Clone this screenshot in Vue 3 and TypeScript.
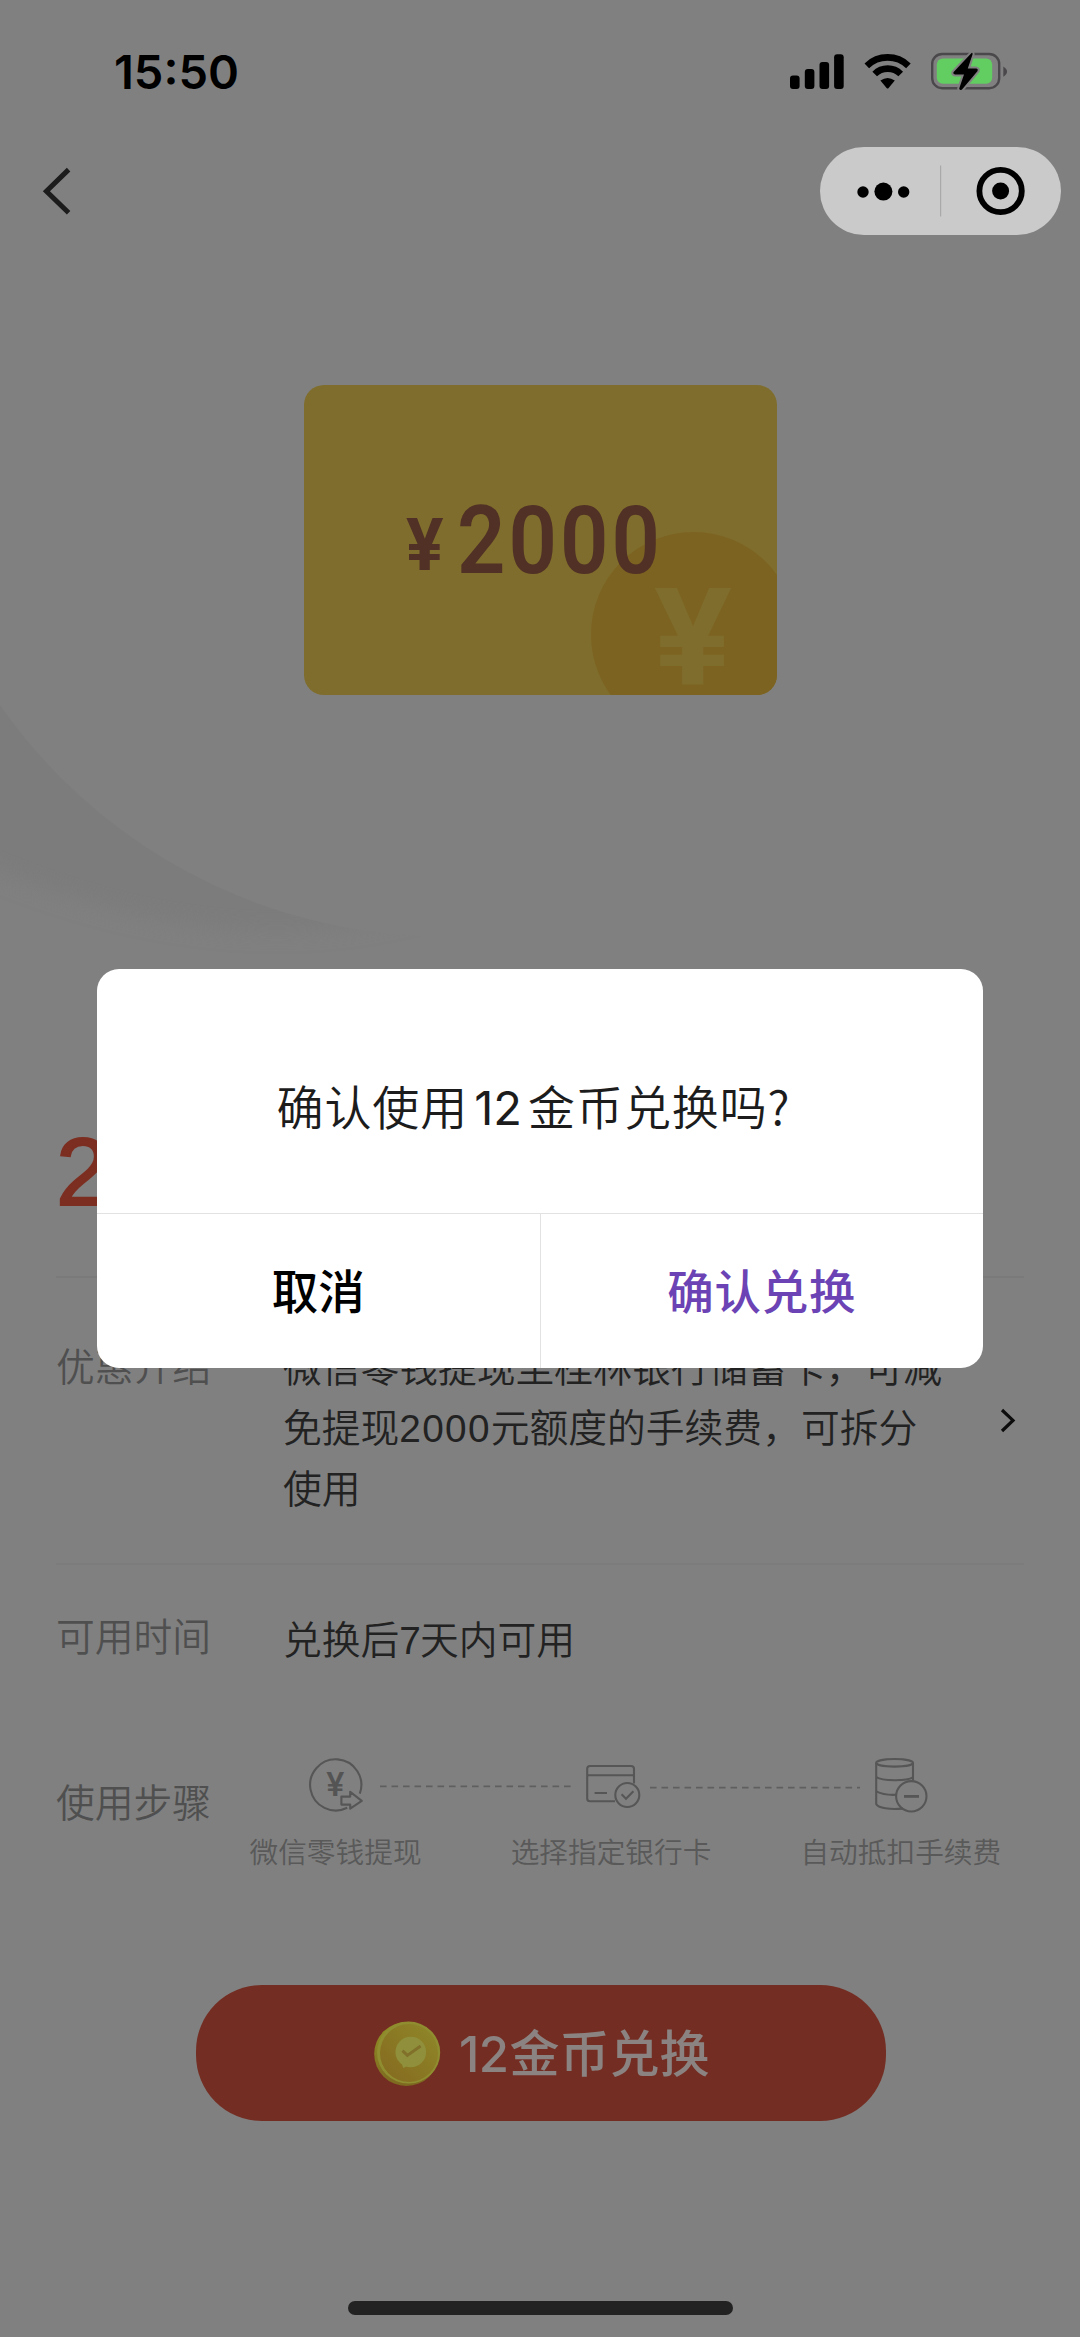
<script setup lang="ts">
interface Step {
  label: string
}

const introLines: string[] = ['微信零钱提现至桂林银行储蓄卡，可减', '免提现|2000|元额度的手续费，可拆分', '使用']
const steps: Step[] = [{ label: '微信零钱提现' }, { label: '选择指定银行卡' }, { label: '自动抵扣手续费' }]
const coins = 12

const isNumber = (part: string): boolean => /^\d+$/.test(part)
</script>

<template>
  <div class="page">
    <svg class="backdrop" viewBox="0 0 1080 968" aria-hidden="true">
      <defs>
        <filter id="soft" x="-20%" y="-20%" width="140%" height="140%">
          <feGaussianBlur stdDeviation="10" />
        </filter>
        <mask id="outside">
          <rect width="1080" height="968" fill="#fff" />
          <circle cx="444.6" cy="394" r="542.6" fill="#000" />
        </mask>
      </defs>
      <g mask="url(#outside)">
        <path d="M-60 600 L60 680 L420 912 Q200 970 -60 845 Z" fill="#7b7b7b" filter="url(#soft)" />
      </g>
    </svg>

    <header class="status">
      <span class="time">15:50</span>
      <svg class="status-icons" width="220" height="44" viewBox="788 50 220 44">
        <rect x="790" y="75.5" width="9.6" height="13.5" rx="3" />
        <rect x="804.8" y="69" width="9.6" height="20" rx="3" />
        <rect x="819.5" y="62" width="9.6" height="27" rx="3" />
        <rect x="834.1" y="54.3" width="9.6" height="34.7" rx="3" />
        <g fill="none" stroke="#000" stroke-width="6.6">
          <path d="M866.8 65.8 A30 30 0 0 1 908.4 65.8" />
          <path d="M874.7 74 A18.5 18.5 0 0 1 900.7 74" />
        </g>
        <path d="M880.4 80.6 Q887.6 75.4 894.8 80.6 L888.6 88 Q887.6 89 886.6 88 Z" />
        <rect x="932.2" y="54" width="67" height="34.2" rx="10" fill="none" stroke="#4b484b" stroke-width="2.4" />
        <path d="M1003.3 66.5 Q1010.8 71.6 1003.3 76.8 Z" fill="#4b484b" />
        <rect x="936.8" y="58.6" width="55.4" height="25.2" rx="6" fill="#62cd60" />
        <path
          d="M971.5 53 L953.4 72.3 Q952.8 74.3 955 74.5 L964 74.5 L959.2 88.6 Q959.6 91 962 89.4 L977.6 71 Q978.4 69 976.4 68.6 L967.8 68.6 L972.6 54.2 Q972.6 52.4 971.5 53 Z"
          stroke="#808080" stroke-width="4" paint-order="stroke"
        />
      </svg>
    </header>

    <nav class="nav">
      <svg width="34" height="50" viewBox="40 166 34 50" fill="none" stroke="#1c1c1c" stroke-width="5">
        <path d="M68.6 169.6 L46.4 191.2 L68.6 212.8" />
      </svg>
      <div class="capsule">
        <svg width="241" height="88" viewBox="820 147 241 88">
          <circle cx="863" cy="192" r="5.7" />
          <circle cx="883.4" cy="191.6" r="9" />
          <circle cx="903.7" cy="192" r="5.7" />
          <rect x="940" y="165.5" width="1.2" height="51" fill="#a9a9a9" />
          <circle cx="1000.6" cy="191" r="21.2" fill="none" stroke="#000" stroke-width="5.8" />
          <circle cx="1000.6" cy="191" r="8.5" />
        </svg>
      </div>
    </nav>

    <section class="coupon">
      <span class="coin-layer"><span class="coin-mark"></span></span>
      <span class="coin-yen">¥</span>
      <span class="yen">¥</span><span class="amount">2000</span>
    </section>

    <main class="details">
      <div class="headline">2</div>

      <div class="row intro">
        <span class="label">优惠介绍</span>
        <div class="value">
          <div v-for="line in introLines" :key="line" class="line">
            <span v-for="part in line.split('|')" :key="part" :class="{ num: isNumber(part) }">{{ part }}</span>
          </div>
        </div>
        <svg class="more" width="18" height="28" viewBox="999 1406 18 28" fill="none" stroke="#0c0c0c" stroke-width="3.2">
          <path d="M1002 1410 L1013 1420.4 L1002 1431" />
        </svg>
      </div>

      <div class="row period">
        <span class="label">可用时间</span>
        <div class="value">兑换后<span class="num">7</span>天内可用</div>
      </div>

      <div class="row usage">
        <span class="label">使用步骤</span>
        <div class="steps">
          <svg width="770" height="66" viewBox="240 1752 770 66" fill="none" stroke="#565656" stroke-width="2.1">
            <path d="M347.2 1807.8 A25.6 25.6 0 1 1 359.8 1793.6" />
            <path d="M341.4 1796.6 H350.2 V1791.8 L361.8 1800.8 L350.2 1808.6 V1804.6 H341.4 Z" stroke-linejoin="round" />
            <text class="step-yen" x="335.4" y="1795.6" text-anchor="middle">¥</text>
            <path d="M380 1786.3 H571.5" stroke="#5f5f5f" stroke-width="1.8" stroke-dasharray="6.6 4.9" />
            <path d="M615 1801.2 H590 Q587.2 1801.2 587.2 1798.4 V1768.8 Q587.2 1766 590 1766 H631 Q634 1766 634 1768.8 V1783.6" />
            <path d="M587.2 1775.2 H634 M594.6 1793 H607" />
            <circle cx="627.3" cy="1795" r="12" />
            <path d="M621.6 1794.2 L626 1798.8 L633.4 1791.2" />
            <path d="M650 1787.7 H860" stroke="#5f5f5f" stroke-width="1.8" stroke-dasharray="6.6 4.9" />
            <ellipse cx="894.6" cy="1762.8" rx="18.4" ry="3.8" />
            <path d="M876.2 1763 V1804 C878 1808 890 1810 902.6 1808.6 M913 1763 V1780.6" />
            <path d="M876.2 1777 C882 1781 906 1781.4 913 1777.4 M876.2 1791.4 Q884 1795.4 896 1794.8" />
            <circle cx="911.3" cy="1796.3" r="15.2" />
            <path d="M904 1796.4 H919" stroke-width="2.8" />
          </svg>
          <div class="step-labels">
            <span v-for="step in steps" :key="step.label">{{ step.label }}</span>
          </div>
        </div>
      </div>
    </main>

    <button class="redeem" type="button">
      <svg width="68" height="68" viewBox="373 2020 68 68">
        <defs>
          <linearGradient id="rim" x1="0" y1="0" x2="0" y2="1">
            <stop offset="0" stop-color="#919126" />
            <stop offset="1" stop-color="#7d6820" />
          </linearGradient>
          <linearGradient id="face" x1="0" y1="1" x2="1" y2="0">
            <stop offset="0" stop-color="#85691f" />
            <stop offset="1" stop-color="#8f8829" />
          </linearGradient>
        </defs>
        <ellipse cx="406.4" cy="2055" rx="32.2" ry="32" fill="url(#rim)" />
        <ellipse cx="408.6" cy="2053.6" rx="31.6" ry="31" fill="#8f8d30" />
        <ellipse cx="409" cy="2054" rx="29" ry="29" fill="url(#face)" />
        <circle cx="410.8" cy="2053" r="15.3" fill="#90903c" />
        <path d="M401 2063 L403.4 2069 L409 2066 Z" fill="#90903c" />
        <path d="M402.4 2051.6 L407.4 2056.4 L420.6 2047" fill="none" stroke="#80702a" stroke-width="3" />
      </svg>
      <span class="redeem-text"><span class="redeem-num">{{ coins }}</span>金币兑换</span>
    </button>

    <div class="home-bar"></div>

    <div class="dialog" role="dialog">
      <p class="message">确认使用<span class="message-num">{{ coins }}</span>金币兑换吗<span class="ask">?</span></p>
      <div class="actions">
        <button type="button" class="action">取消</button>
        <button type="button" class="action confirm">确认兑换</button>
      </div>
    </div>
  </div>
</template>

<style>
body {
  margin: 0;
  background: #808080;
}
</style>

<style scoped>
.page {
  position: relative;
  display: flex;
  flex-direction: column;
  width: 1080px;
  height: 2337px;
  overflow: hidden;
  background: #808080;
  font-family: 'Noto Sans CJK SC', sans-serif;
  color: #222;
}

.page svg {
  display: block;
  flex: none;
}

.backdrop {
  position: absolute;
  top: 0;
  left: 0;
  width: 1080px;
  height: 968px;
}

.status {
  display: flex;
  align-items: center;
  justify-content: space-between;
  height: 144px;
  padding: 0 72px 0 114px;
  flex: none;
  color: #000;
}

.time {
  font: 600 47px/60px Inter, sans-serif;
}

.nav {
  display: flex;
  align-items: center;
  justify-content: space-between;
  height: 94px;
  padding: 0 19px 0 40px;
  flex: none;
}

.capsule {
  border-radius: 44px;
  background: #cacaca;
}

.coupon {
  position: relative;
  flex: none;
  width: 473px;
  height: 310px;
  margin: 146.5px auto 0 304px;
  border-radius: 20px;
  background: #7f6d2d;
  color: #513125;
  font-family: Roboto, sans-serif;
  font-weight: 700;
}

.coin-layer {
  position: absolute;
  inset: 0;
  border-radius: 20px;
  overflow: hidden;
}

.coin-mark {
  position: absolute;
  left: 286.5px;
  top: 147px;
  width: 205px;
  height: 205px;
  border-radius: 50%;
  background: #7d6321;
}

.coin-yen {
  position: absolute;
  left: 339px;
  top: 199px;
  width: 100px;
  font-size: 136px;
  line-height: 110px;
  text-align: center;
  color: #7f6d2d;
  transform: scaleX(1.07);
}

.yen,
.amount {
  position: absolute;
  line-height: 100px;
  transform-origin: 0 50%;
}

.yen {
  left: 102px;
  top: 110px;
  font-size: 73px;
  transform: scaleX(0.96);
}

.amount {
  left: 153px;
  top: 106px;
  font-size: 95px;
  font-weight: 600;
  letter-spacing: 3.4px;
  transform: scaleX(0.893);
}

.details {
  margin: 371.5px 56px 0;
  font-size: 38.77px;
}

.headline {
  height: 210px;
  border-bottom: 2px solid #7a7a7a;
  color: #7c2e21;
  font: 400 96px/211px 'Liberation Sans', sans-serif;
  -webkit-text-stroke: 2px #7c2e21;
}

.row {
  position: relative;
  display: flex;
  box-sizing: border-box;
  line-height: 60.8px;
  white-space: nowrap;
}

.label {
  width: 227px;
  flex: none;
  margin-top: -1px;
  color: #4f4f4f;
  font-weight: 350;
}

.num {
  font-family: 'Liberation Sans', sans-serif;
  letter-spacing: 1.3px;
}

.intro {
  height: 287px;
  padding-top: 56.6px;
  border-bottom: 2px solid #7c7c7c;
}

.value {
  flex: 1;
  font-weight: 350;
}

.line {
  height: 60.8px;
}

.more {
  align-self: flex-start;
  margin: 71px 7px 0 0;
}

.period {
  height: 145px;
  padding-top: 39.5px;
}

.period .value {
  padding-top: 2px;
}

.period .num {
  letter-spacing: -1px;
}

.usage {
  height: 180px;
}

.usage .label {
  width: 184px;
  padding-top: 61px;
}

.steps {
  padding-top: 42px;
}

.step-yen {
  font: 500 34px Roboto, sans-serif;
  fill: #545454;
  stroke: none;
}

.step-labels {
  display: flex;
  margin-left: 9.5px;
  font-size: 28.7px;
  font-weight: 350;
  line-height: 44px;
  margin-top: 11px;
  gap: 89px;
  color: #595959;
}

.redeem {
  display: flex;
  align-items: center;
  flex: none;
  width: 690px;
  height: 136px;
  margin: 95px auto 0 195.5px;
  padding: 0 0 0 177.5px;
  border: 0;
  border-radius: 66px;
  background: #742d22;
  color: #8b8381;
  font-family: 'Noto Sans CJK SC', sans-serif;
}

.redeem-text {
  margin: -2px 0 0 17px;
  font-size: 50px;
  font-weight: 500;
  line-height: 70px;
  white-space: nowrap;
}

.redeem-num {
  display: inline-block;
  width: 51.5px;
  font-family: Inter, sans-serif;
  font-size: 49px;
  letter-spacing: -0.5px;
}

.home-bar {
  flex: none;
  width: 385px;
  height: 14px;
  margin: 180px auto 0 348px;
  border-radius: 7px;
  background: #222;
}

.dialog {
  position: absolute;
  left: 97px;
  top: 968.5px;
  display: flex;
  flex-direction: column;
  width: 886px;
  height: 399px;
  border-radius: 22px;
  overflow: hidden;
  background: #fff;
}

.message {
  margin: 0;
  height: 244px;
  padding: 0 0 0 179.5px;
  font-size: 47px;
  font-weight: 350;
  line-height: 272px;
  letter-spacing: 0.9px;
  white-space: nowrap;
  color: #1c1c1c;
}

.message-num {
  display: inline-block;
  width: 60px;
  font-family: Inter, sans-serif;
  font-weight: 400;
  letter-spacing: 0;
  text-align: center;
}

.actions {
  display: flex;
  flex: 1;
  border-top: 1px solid #e2e2e2;
}

.action {
  flex: 1;
  padding: 0 0 5px;
  border: 0;
  background: none;
  font: 500 46.5px/145px 'Noto Sans CJK SC', sans-serif;
  color: #000;
}

.confirm {
  border-left: 1px solid #e2e2e2;
  letter-spacing: 0.8px;
  color: #6b43b4;
}
</style>
